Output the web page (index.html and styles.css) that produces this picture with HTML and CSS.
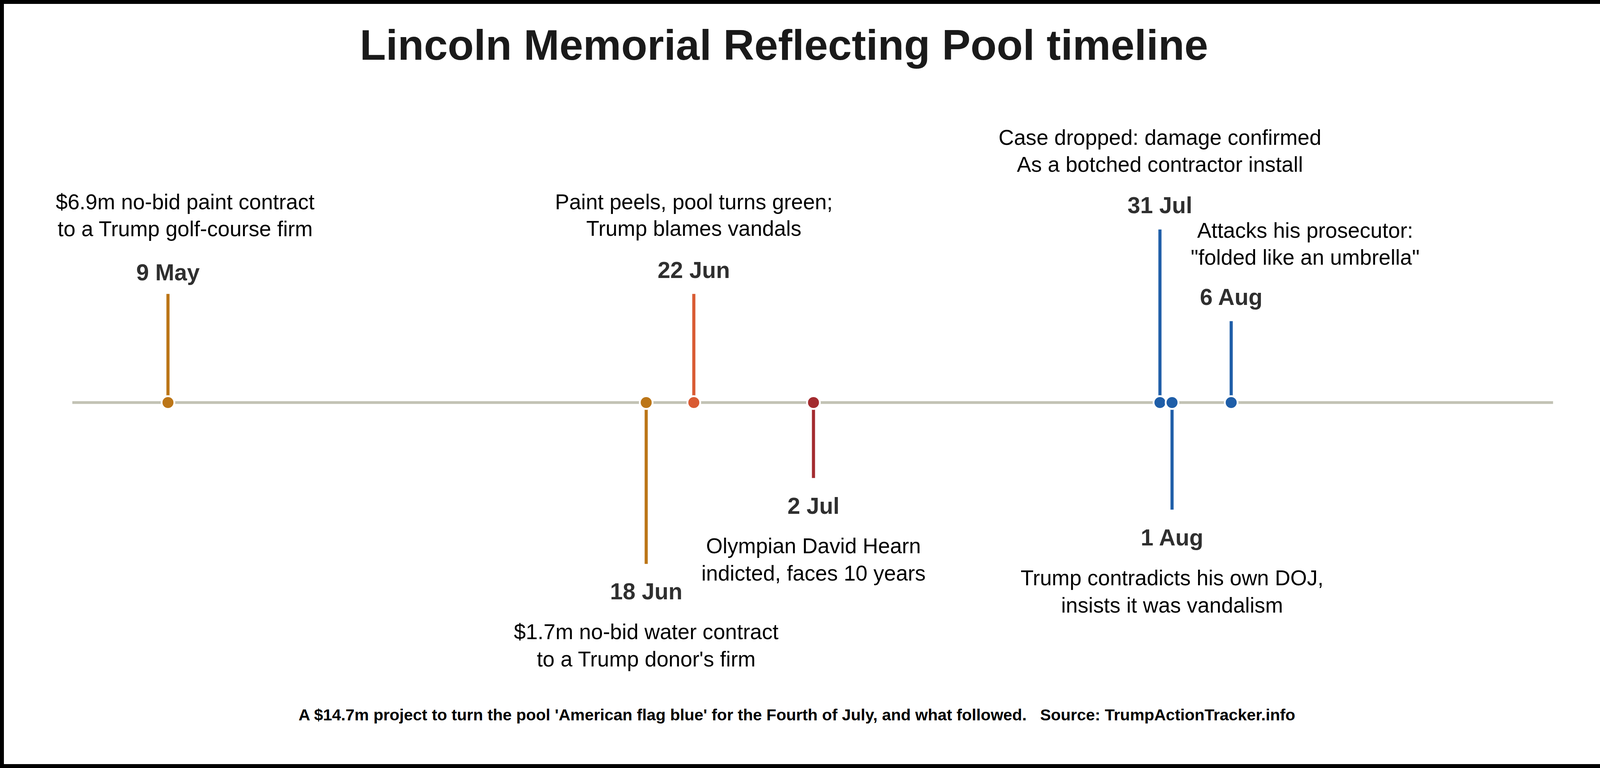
FILE: index.html
```html
<!DOCTYPE html>
<html lang="en">
<head>
<meta charset="utf-8">
<title>Lincoln Memorial Reflecting Pool timeline</title>
<link rel="stylesheet" href="styles.css">
</head>
<body>
<div class="frame">
  <h1 class="title">Lincoln Memorial Reflecting Pool timeline</h1>
  <svg class="chart" viewBox="10 177 4154 1630" width="4154" height="1630" xmlns="http://www.w3.org/2000/svg">
    <line class="axis" x1="184" y1="1030.5" x2="3977" y2="1030.5"/>

    <line class="stem gold" x1="429" y1="1030" x2="429" y2="752"/>
    <line class="stem gold" x1="1654" y1="1030" x2="1654" y2="1444"/>
    <line class="stem orange" x1="1776" y1="1030" x2="1776" y2="752"/>
    <line class="stem red" x1="2082.5" y1="1030" x2="2082.5" y2="1224"/>
    <line class="stem blue" x1="2970" y1="1030" x2="2970" y2="587"/>
    <line class="stem blue" x1="3001" y1="1030" x2="3001" y2="1305"/>
    <line class="stem blue" x1="3152.5" y1="1030" x2="3152.5" y2="822"/>

    <circle class="dot gold" cx="429" cy="1030.5" r="16.4"/>
    <circle class="dot gold" cx="1654" cy="1030.5" r="16.4"/>
    <circle class="dot orange" cx="1776" cy="1030.5" r="16.4"/>
    <circle class="dot red" cx="2082.5" cy="1030.5" r="16.4"/>
    <circle class="dot blue" cx="2970" cy="1030.5" r="16.4"/>
    <circle class="dot blue" cx="3001" cy="1030.5" r="16.4"/>
    <circle class="dot blue" cx="3152.5" cy="1030.5" r="16.4"/>

    <text class="desc"><tspan x="473" y="535">$6.9m no-bid paint contract</tspan><tspan x="473" y="604">to a Trump golf-course firm</tspan></text>
    <text class="date" x="429" y="717">9 May</text>

    <text class="date" x="1654" y="1535">18 Jun</text>
    <text class="desc"><tspan x="1654" y="1637">$1.7m no-bid water contract</tspan><tspan x="1654" y="1707">to a Trump donor's firm</tspan></text>

    <text class="desc"><tspan x="1776" y="535">Paint peels, pool turns green;</tspan><tspan x="1776" y="603">Trump blames vandals</tspan></text>
    <text class="date" x="1776" y="711">22 Jun</text>

    <text class="date" x="2082.5" y="1316">2 Jul</text>
    <text class="desc"><tspan x="2082.5" y="1417">Olympian David Hearn</tspan><tspan x="2082.5" y="1487">indicted, faces 10 years</tspan></text>

    <text class="desc"><tspan x="2970" y="370">Case dropped: damage confirmed</tspan><tspan x="2970" y="439">As a botched contractor install</tspan></text>
    <text class="date" x="2970" y="545">31 Jul</text>

    <text class="date" x="3001" y="1397">1 Aug</text>
    <text class="desc"><tspan x="3001" y="1499">Trump contradicts his own DOJ,</tspan><tspan x="3001" y="1569">insists it was vandalism</tspan></text>

    <text class="desc"><tspan x="3342" y="608">Attacks his prosecutor:</tspan><tspan x="3342" y="677">"folded like an umbrella"</tspan></text>
    <text class="date" x="3152.5" y="780">6 Aug</text>
  </svg>
  <p class="footer">A $14.7m project to turn the pool 'American flag blue' for the Fourth of July, and what followed.   Source: TrumpActionTracker.info</p>
</div>
</body>
</html>
```

FILE: styles.css
```css
html, body {
  margin: 0;
  padding: 0;
  background: #ffffff;
  overflow: hidden;
}

.frame {
  box-sizing: border-box;
  width: 4174px;
  height: 1967px;
  border: 10px solid #000000;
  background: #ffffff;
  display: flex;
  flex-direction: column;
  font-family: "Liberation Sans", Arial, Helvetica, sans-serif;
}

.title {
  margin: 0;
  padding: 42px 160px 0 0;
  font-size: 109.5px;
  line-height: 126px;
  font-weight: 700;
  color: #1a1a1a;
  text-align: center;
}

.chart {
  display: block;
  width: 4154px;
  height: 1629px;
  flex: none;
}

.axis {
  stroke: #c2c2b4;
  stroke-width: 7;
}

.stem {
  stroke-width: 8;
  stroke-linecap: butt;
}

.dot {
  stroke: #ffffff;
  stroke-width: 4.6;
}

.stem.gold { stroke: #bc7618; }
.stem.orange { stroke: #d95b33; }
.stem.red { stroke: #a32b2f; }
.stem.blue { stroke: #1f5ea8; }

.dot.gold { fill: #bc7618; }
.dot.orange { fill: #d95b33; }
.dot.red { fill: #a32b2f; }
.dot.blue { fill: #1f5ea8; }

.date {
  font-family: "Liberation Sans", Arial, sans-serif;
  font-size: 58.5px;
  font-weight: 700;
  fill: #2f2f2f;
  text-anchor: middle;
}

.desc {
  font-family: "Liberation Sans", Arial, sans-serif;
  font-size: 54.7px;
  fill: #000000;
  text-anchor: middle;
}

.footer {
  margin: 0;
  padding: 0 94px 0 0;
  font-size: 41.4px;
  line-height: 48px;
  font-weight: 700;
  color: #000000;
  text-align: center;
  white-space: pre;
}
```
